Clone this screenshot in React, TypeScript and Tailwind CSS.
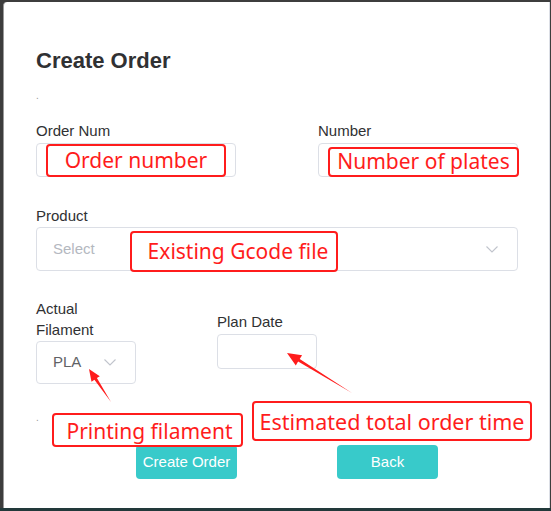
import React from "react";

const Chevron = ({ className }: { className?: string }) => (
  <svg className={className} width="12" height="7" viewBox="0 0 12 7" fill="none">
    <path d="M0.5 0.5 L6 6 L11.5 0.5" stroke="#c0c4cc" strokeWidth="1.1" />
  </svg>
);

const Note = ({
  text,
  className,
}: {
  text: string;
  className: string;
}) => (
  <div
    className={`absolute flex items-center justify-center rounded-[4px] border-[2.5px] border-[#ff1c1c] bg-white text-[#ff1c1c] whitespace-nowrap font-['Noto_Sans',sans-serif] ${className}`}
  >
    {text}
  </div>
);

export default function App() {
  return (
    <div className="relative w-[551px] h-[511px] overflow-hidden bg-[#3d3d3d] font-['Liberation_Sans',Arial,sans-serif]">
      <div className="ml-[3px] mt-[2px] w-[547px] h-[506px] bg-white rounded-tl-[4px] border-l border-[#9a9a9a] border-r-[#dcdfe6] border-r pl-[32px] pt-[46px] text-[#303133]">
        <h1 className="h-[26px] leading-[26px] text-[22px] font-bold text-[#303133]">Create Order</h1>
        <div className="mt-[12px] h-[20px] leading-[20px] text-[10px] text-[#999]">.</div>

        <div className="mt-[15px] flex gap-[82px]">
          <div className="w-[200px]">
            <div className="h-[20px] leading-[20px] text-[15px]">Order Num</div>
            <div className="mt-[2px] h-[34px] rounded-[4px] border border-[#dcdfe6] bg-white" />
          </div>
          <div className="w-[200px]">
            <div className="h-[20px] leading-[20px] text-[15px]">Number</div>
            <div className="mt-[2px] h-[34px] rounded-[4px] border border-[#dcdfe6] bg-white" />
          </div>
        </div>

        <div className="mt-[29px] w-[482px]">
          <div className="h-[20px] leading-[20px] text-[15px]">Product</div>
          <div className="mt-[1px] h-[44px] rounded-[4px] border border-[#dcdfe6] flex items-center justify-between pl-[16px] pr-[19px]">
            <span className="text-[15px] text-[#b4b8bf]">Select</span>
            <Chevron />
          </div>
        </div>

        <div className="mt-[27px] flex gap-[81px]">
          <div className="w-[100px]">
            <div className="text-[15px] leading-[21px] h-[42px]">
              Actual
              <br />
              Filament
            </div>
            <div className="mt-[1px] h-[43px] rounded-[4px] border border-[#dcdfe6] flex items-center pl-[16px] gap-[23px]">
              <span className="text-[15px] text-[#606266]">PLA</span>
              <Chevron />
            </div>
          </div>
          <div className="w-[100px] mt-[14px]">
            <div className="h-[20px] leading-[20px] text-[15px]">Plan Date</div>
            <div className="mt-[2px] h-[35px] rounded-[4px] border border-[#dcdfe6]" />
          </div>
        </div>

        <div className="mt-[24px] h-[20px] leading-[20px] text-[10px] text-[#999]">.</div>

        <div className="mt-[17px] ml-[100px] flex gap-[100px]">
          <button className="w-[101px] h-[34px] rounded-[4px] bg-[#38caca] text-white text-[15px]">Create Order</button>
          <button className="w-[101px] h-[34px] rounded-[4px] bg-[#38caca] text-white text-[15px]">Back</button>
        </div>
      </div>
      <div className="absolute left-0 bottom-0 w-[551px] h-[3px] bg-[#22393a]" />

      <Note text="Order number" className="left-[46px] top-[144px] w-[180px] h-[33px] text-[21px]" />
      <Note text="Number of plates" className="left-[328px] top-[147px] w-[191px] h-[30px] text-[21px]" />
      <Note text="Existing Gcode file" className="left-[130px] top-[231px] w-[208px] h-[41px] text-[21px] pl-[8px]" />
      <Note text="Printing filament" className="left-[52px] top-[413px] w-[191px] h-[34px] text-[21px] pl-[4px] pt-[3px]" />
      <Note text="Estimated total order time" className="left-[252px] top-[401px] w-[280px] h-[40px] text-[21.5px] pt-[3px]" />

      <svg className="absolute left-0 top-0" width="551" height="511" viewBox="0 0 551 511">
        <polygon points="89,369 99.8,376.2 96.9,378.1 111,402 94.4,379.8 91.5,381.7" fill="#ff1c1c" />
        <polygon points="287,353 302.1,355.2 299.7,359 352,393 298.1,361.6 295.8,365.4" fill="#ff1c1c" />
      </svg>
    </div>
  );
}
